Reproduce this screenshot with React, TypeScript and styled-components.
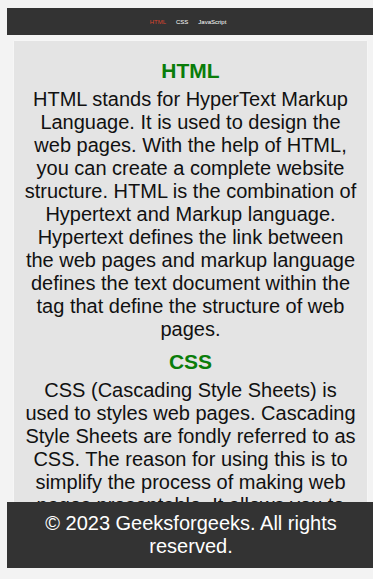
import React from 'react';
import styled, { createGlobalStyle } from 'styled-components';

const GlobalStyle = createGlobalStyle`
  html, body {
    margin: 0;
    background: #f3f3f3;
    font-family: "Liberation Sans", Arial, sans-serif;
    overflow-x: hidden;
  }
`;

const sections = [
  {
    title: 'HTML',
    text: 'HTML stands for HyperText Markup Language. It is used to design the web pages. With the help of HTML, you can create a complete website structure. HTML is the combination of Hypertext and Markup language. Hypertext defines the link between the web pages and markup language defines the text document within the tag that define the structure of web pages.',
  },
  {
    title: 'CSS',
    text: 'CSS (Cascading Style Sheets) is used to styles web pages. Cascading Style Sheets are fondly referred to as CSS. The reason for using this is to simplify the process of making web pages presentable. It allows you to apply styles on web pages. More importantly, it enables you to do this independent of the HTML that makes up each web page.',
  },
  {
    title: 'JavaScript',
    text: 'JavaScript is a lightweight, cross-platform, single-threaded, and interpreted compiled programming language. It is also known as the scripting language for webpages. It is well-known for the development of web pages, and many non-browser environments also use it.',
  },
];

const App: React.FC = () => {
  return (
    <>
      <GlobalStyle />
      <Page>
        <Header>
          <NavLink $active>HTML</NavLink>
          <NavLink>CSS</NavLink>
          <NavLink>JavaScript</NavLink>
        </Header>

        <Main>
          {sections.map((s) => (
            <Section key={s.title}>
              <Title>{s.title}</Title>
              <Text>{s.text}</Text>
            </Section>
          ))}
        </Main>
      </Page>

      <FooterDock>
        <Footer>© 2023 Geeksforgeeks. All rights reserved.</Footer>
      </FooterDock>
    </>
  );
};

export default App;

// Estilos

const Page = styled.div`
  padding: 8px 0 90px 7px;
`;

const Header = styled.nav`
  width: 368px;
  height: 27px;
  background-color: #333;
  display: flex;
  justify-content: center;
  align-items: center;
  padding-right: 6px;
  box-sizing: border-box;
`;

const NavLink = styled.a<{ $active?: boolean }>`
  font-size: 6px;
  color: ${(p) => (p.$active ? '#d9442e' : '#fff')};
  margin: 0 5px;
  text-decoration: none;
  cursor: pointer;
`;

const Main = styled.main`
  width: 353px;
  box-sizing: border-box;
  margin: 6px 0 0 7px;
  padding: 18px 8px 10px;
  background-color: #e4e4e4;
  box-shadow: 0 0 2px rgba(255, 255, 255, 0.9);
`;

const Section = styled.section`
  margin-bottom: 9px;
`;

const Title = styled.h2`
  margin: 0 0 6px;
  font-size: 21px;
  line-height: 23px;
  font-weight: bold;
  color: #0a7d0a;
  text-align: center;
`;

const Text = styled.p`
  margin: 0;
  font-size: 20px;
  line-height: 23px;
  color: #111;
  text-align: center;
`;

const FooterDock = styled.div`
  position: fixed;
  left: 0;
  right: 0;
  bottom: 0;
  padding: 0 0 11px 7px;
  background-color: #f3f3f3;
`;

const Footer = styled.footer`
  width: 368px;
  padding: 10px 0;
  background-color: #333;
  color: #fff;
  font-size: 20px;
  line-height: 23px;
  text-align: center;
`;
